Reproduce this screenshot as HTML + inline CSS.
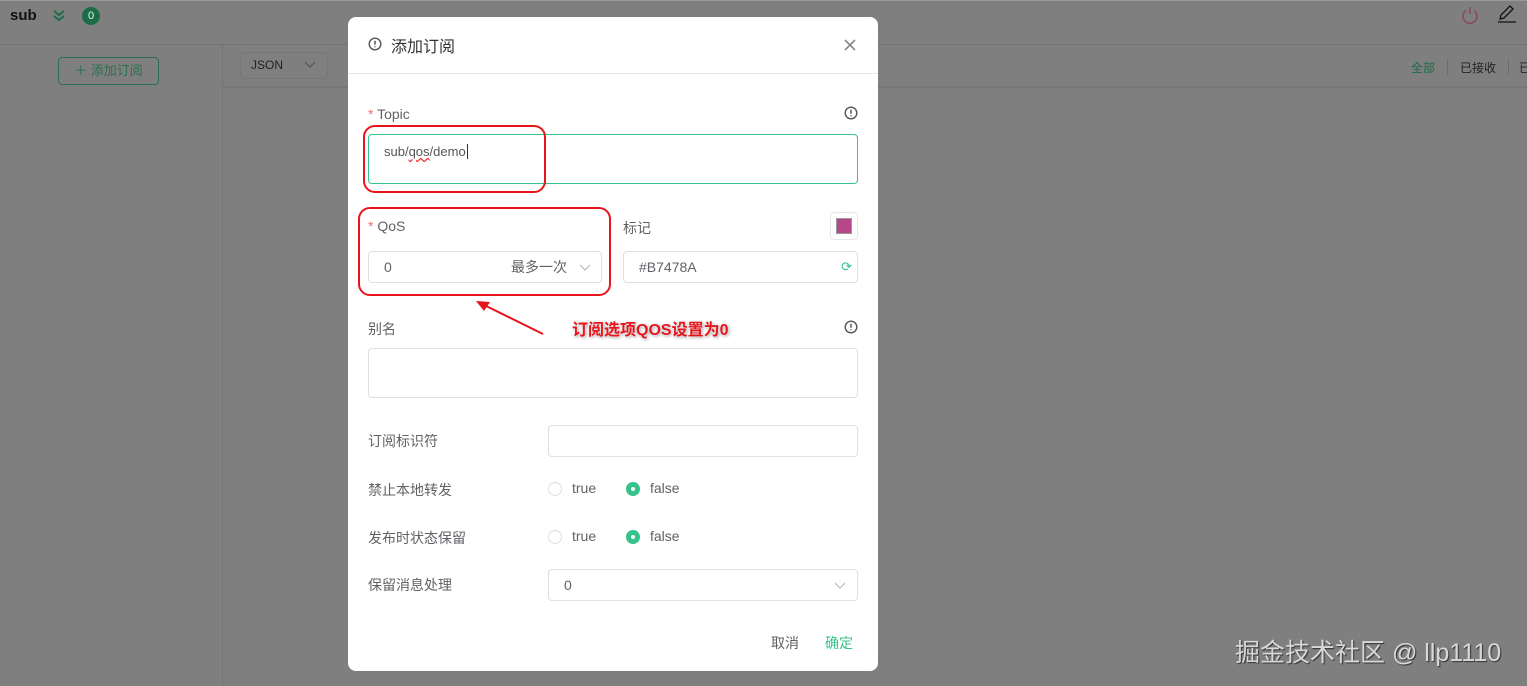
<!DOCTYPE html>
<html><head><meta charset="utf-8"><style>
*{box-sizing:border-box;margin:0;padding:0}
body{width:1527px;height:686px;overflow:hidden;background:#7f7f7f;font-family:"Liberation Sans","Noto Sans CJK SC",sans-serif;position:relative;color:#333}
.abs{position:absolute}
.modal{left:348px;top:17px;width:530px;height:654px;background:#fff;border-radius:8px}
.lbl{font-size:14px;color:#606266}
.inp{border:1px solid #dcdfe6;border-radius:4px;background:#fff}
.red{border:2.5px solid #e8141b;border-radius:12px}
.radio{width:14px;height:14px;border-radius:50%;border:1px solid #dcdfe6}
.radio.on{background:#34c388;border-color:#34c388}
.radio.on::after{content:"";display:block;width:4px;height:4px;background:#fff;border-radius:50%;margin:4px}
.rt{font-size:14px;color:#606266}
.chev{position:absolute}
</style></head><body>
<div class="abs" style="left:0;top:0;width:1527px;height:1px;background:#999"></div>
<div class="abs" style="left:0;top:44px;width:1527px;height:1px;background:#747474"></div>
<div class="abs" style="left:222px;top:45px;width:1px;height:641px;background:#747474"></div>
<div class="abs" style="left:223px;top:86px;width:1304px;height:2px;background:#767676"></div>
<div class="abs" style="left:10px;top:7px;font-size:15px;font-weight:bold;color:#111">sub</div>
<svg class="abs" style="left:52px;top:9px" width="14" height="14" viewBox="0 0 14 14"><path d="M2 2l5 4 5-4M2 7l5 4 5-4" stroke="#1e6b48" stroke-width="2" fill="none"/></svg>
<div class="abs" style="left:82px;top:7px;width:18px;height:18px;border-radius:50%;background:#1e6b48;color:#cfe;font-size:11px;text-align:center;line-height:18px">0</div>
<div class="abs" style="left:58px;top:57px;width:101px;height:28px;border:1px solid #2a7050;border-radius:4px;color:#2a7050;font-size:13px;line-height:26px;text-align:center">＋ 添加订阅</div>
<div class="abs" style="left:240px;top:52px;width:88px;height:27px;border:1px solid #777;border-radius:4px;font-size:12px;color:#222;line-height:25px;padding-left:10px">JSON</div>
<svg class="abs" style="left:304px;top:61px" width="12" height="8"><path d="M1 1l5 5 5-5" stroke="#555" stroke-width="1.2" fill="none"/></svg>
<svg class="abs" style="left:1461px;top:6px" width="18" height="18" viewBox="0 0 18 18"><path d="M5 4.5a7 7 0 1 0 8 0M9 1v7" stroke="#8a4a55" stroke-width="1.5" fill="none"/></svg>
<svg class="abs" style="left:1497px;top:5px" width="20" height="18" viewBox="0 0 20 18"><path d="M3 14l1-4 9-9 3 3-9 9z M1 17h18" stroke="#111" stroke-width="1.3" fill="none"/></svg>
<div class="abs" style="left:1411px;top:59px;font-size:12px;color:#1e6b48">全部</div>
<div class="abs" style="left:1447px;top:60px;width:1px;height:15px;background:#6a6a6a"></div>
<div class="abs" style="left:1460px;top:59px;font-size:12px;color:#222">已接收</div>
<div class="abs" style="left:1508px;top:60px;width:1px;height:15px;background:#6a6a6a"></div>
<div class="abs" style="left:1519px;top:59px;font-size:12px;color:#222">已</div>
<div class="abs" style="left:1235px;top:633px;font-size:25px;color:#d8d8d8;text-shadow:1px 1px 1px #333">掘金技术社区 @ llp1110</div>

<div class="abs modal">
 <svg class="abs" style="left:20px;top:20px" width="14" height="14" viewBox="0 0 14 14"><circle cx="7" cy="7" r="5.8" stroke="#555" stroke-width="1.4" fill="none"/><path d="M7 3.8v4M7 9.3v1" stroke="#555" stroke-width="1.5"/></svg>
 <div class="abs" style="left:43px;top:16px;font-size:16px;color:#333">添加订阅</div>
 <svg class="abs" style="left:496px;top:22px" width="12" height="12"><path d="M1 1l10 10M11 1L1 11" stroke="#888" stroke-width="1.6"/></svg>
 <div class="abs" style="left:0;top:56px;width:530px;height:1px;background:#e4e7ed"></div>

 <div class="abs lbl" style="left:20px;top:89px"><span style="color:#f56c6c">*</span> Topic</div>
 <svg class="abs" style="left:496px;top:89px" width="14" height="14" viewBox="0 0 14 14"><circle cx="7" cy="7" r="5.8" stroke="#555" stroke-width="1.4" fill="none"/><path d="M7 3.8v4M7 9.3v1" stroke="#555" stroke-width="1.5"/></svg>
 <div class="abs inp" style="left:20px;top:117px;width:490px;height:50px;border-color:#34c388;font-size:13px;color:#555;padding:9px 15px">sub/<span style="text-decoration:underline wavy #e33">qos</span>/demo<span style="border-left:1px solid #333;margin-left:1px"></span></div>
 <div class="abs red" style="left:15px;top:108px;width:183px;height:68px"></div>

 <div class="abs lbl" style="left:20px;top:201px"><span style="color:#f56c6c">*</span> QoS</div>
 <div class="abs inp" style="left:20px;top:234px;width:234px;height:32px;font-size:14px;color:#606266;line-height:30px;padding-left:15px">0<span style="position:absolute;left:142px">最多一次</span></div>
 <svg class="abs" style="left:231px;top:247px" width="12" height="8"><path d="M1 1l5 5 5-5" stroke="#bbb" stroke-width="1.2" fill="none"/></svg>
 <div class="abs red" style="left:10px;top:190px;width:253px;height:89px"></div>
 <div class="abs lbl" style="left:275px;top:201px">标记</div>
 <div class="abs" style="left:482px;top:195px;width:28px;height:28px;border:1px solid #e4e7ed;border-radius:4px;padding:5px"><div style="width:16px;height:16px;background:#b7478a;border:1px solid #999"></div></div>
 <div class="abs inp" style="left:275px;top:234px;width:235px;height:32px;font-size:14px;color:#606266;line-height:30px;padding-left:15px">#B7478A<span style="position:absolute;right:5px;color:#34c388;font-size:13px">⟳</span></div>

 <svg class="abs" style="left:120px;top:275px" width="100" height="50"><path d="M75 42L10 10" stroke="#e8141b" stroke-width="2"/><path d="M8 9l14 1-6 9z" fill="#e8141b"/></svg>
 <div class="abs" style="left:224px;top:299px;font-size:16px;font-weight:bold;color:#e8141b;text-shadow:0 0 2px #fff,1px 1px 3px #888">订阅选项QOS设置为0</div>

 <div class="abs lbl" style="left:20px;top:302px">别名</div>
 <svg class="abs" style="left:496px;top:303px" width="14" height="14" viewBox="0 0 14 14"><circle cx="7" cy="7" r="5.8" stroke="#555" stroke-width="1.4" fill="none"/><path d="M7 3.8v4M7 9.3v1" stroke="#555" stroke-width="1.5"/></svg>
 <div class="abs inp" style="left:20px;top:331px;width:490px;height:50px"></div>

 <div class="abs lbl" style="left:20px;top:414px">订阅标识符</div>
 <div class="abs inp" style="left:200px;top:408px;width:310px;height:32px"></div>
 <div class="abs lbl" style="left:20px;top:463px">禁止本地转发</div>
 <div class="abs radio" style="left:200px;top:465px"></div><div class="abs rt" style="left:224px;top:463px">true</div>
 <div class="abs radio on" style="left:278px;top:465px"></div><div class="abs rt" style="left:302px;top:463px">false</div>
 <div class="abs lbl" style="left:20px;top:511px">发布时状态保留</div>
 <div class="abs radio" style="left:200px;top:513px"></div><div class="abs rt" style="left:224px;top:511px">true</div>
 <div class="abs radio on" style="left:278px;top:513px"></div><div class="abs rt" style="left:302px;top:511px">false</div>
 <div class="abs lbl" style="left:20px;top:558px">保留消息处理</div>
 <div class="abs inp" style="left:200px;top:552px;width:310px;height:32px;font-size:14px;color:#606266;line-height:30px;padding-left:15px">0</div>
 <svg class="abs" style="left:486px;top:565px" width="12" height="8"><path d="M1 1l5 5 5-5" stroke="#bbb" stroke-width="1.2" fill="none"/></svg>
 <div class="abs" style="left:423px;top:616px;font-size:14px;color:#606266">取消</div>
 <div class="abs" style="left:477px;top:616px;font-size:14px;color:#34c388">确定</div>
</div>
</body></html>
